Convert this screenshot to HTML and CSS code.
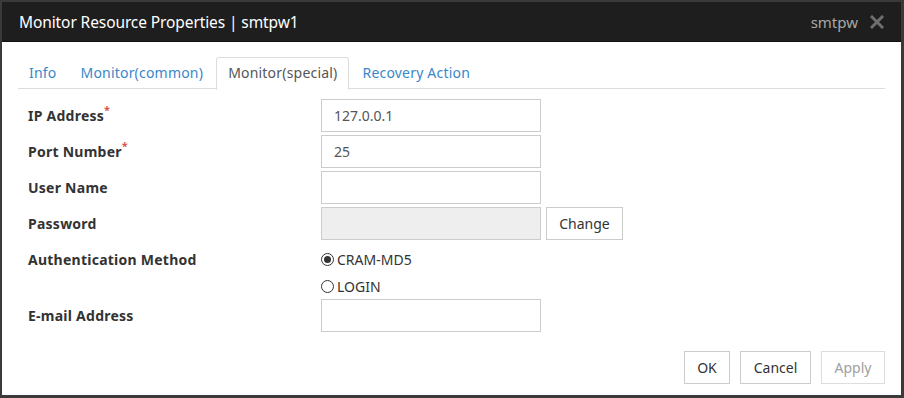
FILE: index.html
```html
<!doctype html>
<html lang="en">
    <head>
        <meta charset="UTF-8" />
        <title>Monitor Resource Properties</title>
        <link rel="stylesheet" href="styles.css">
    </head>
    <body>
        <div class="dialog">
            <div class="dialog-header">
                <span class="dialog-title">Monitor Resource Properties | smtpw1</span>
                <span class="dialog-header__right">
                    <span class="dialog-type">smtpw</span>
                    <svg class="dialog-close" width="14" height="14" viewBox="0 0 14 14">
                        <path d="M2 2 L12 12 M12 2 L2 12" stroke="#6e6e6e" stroke-width="3" stroke-linecap="square" />
                    </svg>
                </span>
            </div>
            <div class="dialog-body">
                <ul class="tabs">
                    <li class="tab">Info</li>
                    <li class="tab">Monitor(common)</li>
                    <li class="tab tab--active">Monitor(special)</li>
                    <li class="tab">Recovery Action</li>
                </ul>
                <div class="form">
                    <div class="form-row">
                        <label class="form-label">IP Address<span class="required">*</span></label>
                        <input class="form-input" type="text" value="127.0.0.1" />
                    </div>
                    <div class="form-row">
                        <label class="form-label">Port Number<span class="required">*</span></label>
                        <input class="form-input" type="text" value="25" />
                    </div>
                    <div class="form-row">
                        <label class="form-label">User Name</label>
                        <input class="form-input" type="text" value="" />
                    </div>
                    <div class="form-row">
                        <label class="form-label">Password</label>
                        <input class="form-input form-input--disabled" type="text" value="" disabled />
                        <button class="btn btn--change">Change</button>
                    </div>
                    <div class="form-row form-row--radio">
                        <label class="form-label">Authentication Method</label>
                        <div class="radio-group">
                            <div class="radio"><span class="radio-mark radio-mark--on"></span>CRAM-MD5</div>
                            <div class="radio"><span class="radio-mark"></span>LOGIN</div>
                        </div>
                    </div>
                    <div class="form-row form-row--email">
                        <label class="form-label">E-mail Address</label>
                        <input class="form-input" type="text" value="" />
                    </div>
                </div>
                <div class="dialog-footer">
                    <button class="btn btn--ok">OK</button>
                    <button class="btn btn--cancel">Cancel</button>
                    <button class="btn btn--apply" disabled>Apply</button>
                </div>
            </div>
        </div>
    </body>
</html>
```

FILE: styles.css
```css
* {
    padding: 0;
    margin: 0;
    box-sizing: border-box;
}

body {
    font-family: "Noto Sans", "Liberation Sans", sans-serif;
    background-color: #ffffff;
    width: 904px;
    height: 398px;
    overflow: hidden;
}

.dialog {
    width: 904px;
    height: 398px;
    border: 2px solid #3a3a3a;
    border-right-width: 3px;
    border-bottom-width: 3px;
    background: #ffffff;
    display: flex;
    flex-direction: column;
}

.dialog-header {
    height: 40px;
    background: #1e1e1e;
    color: #ffffff;
    display: flex;
    align-items: center;
    justify-content: space-between;
    padding: 0 17px 0 17px;
    border-bottom: 1px solid #111111;
}

.dialog-title {
    font-size: 15.5px;
    letter-spacing: -0.1px;
}

.dialog-header__right {
    display: flex;
    align-items: center;
    gap: 12px;
}

.dialog-type {
    color: #a8a8a8;
    font-size: 15px;
}

.dialog-close {
    display: block;
}

.dialog-body {
    flex: 1;
    padding: 15px 16px 0 16px;
    display: flex;
    flex-direction: column;
}

.tabs {
    list-style: none;
    display: flex;
    border-bottom: 1px solid #dddddd;
    height: 32px;
    font-size: 14px;
    letter-spacing: 0.2px;
}

.tab {
    color: #3a87c8;
    padding: 0 10px;
    margin-right: 2px;
    line-height: 30px;
    border: 1px solid transparent;
    border-bottom: none;
}

.tab--active {
    color: #555555;
    background: #ffffff;
    border-color: #dddddd;
    border-radius: 3px 3px 0 0;
    height: 33px;
    margin-bottom: -1px;
    padding: 0 11px;
}

.form {
    padding: 10px 0 0 10px;
    display: flex;
    flex-direction: column;
    gap: 3px;
}

.form-row {
    display: flex;
    align-items: center;
    height: 33px;
}

.form-label {
    width: 293px;
    font-size: 14px;
    font-weight: 700;
    color: #333333;
    letter-spacing: 0.25px;
}

.required {
    color: #d9534f;
    font-size: 11px;
    vertical-align: top;
    position: relative;
    top: -4px;
}

.form-input {
    width: 220px;
    height: 33px;
    border: 1px solid #cccccc;
    padding: 0 12px;
    font-family: inherit;
    font-size: 14px;
    color: #555555;
    background: #ffffff;
    outline: none;
}

.form-input--disabled {
    background: #eeeeee;
}

.btn {
    font-family: inherit;
    font-size: 14px;
    color: #333333;
    background: #ffffff;
    border: 1px solid #cccccc;
    height: 33px;
    padding: 0 10px;
}

.btn--change {
    margin-left: 5px;
    width: 77px;
}

.form-row--radio {
    height: auto;
    align-items: flex-start;
    margin-top: 7px;
}

.radio-group {
    display: flex;
    flex-direction: column;
    gap: 8px;
    font-size: 14px;
    color: #333333;
}

.radio {
    display: flex;
    align-items: center;
    height: 19px;
}

.radio-mark {
    width: 13px;
    height: 13px;
    border: 1px solid #333333;
    border-radius: 50%;
    margin-right: 3px;
    display: flex;
    align-items: center;
    justify-content: center;
}

.radio-mark--on::after {
    content: "";
    width: 7px;
    height: 7px;
    border-radius: 50%;
    background: #333333;
}

.form-row--email {
    margin-top: 0;
}

.form-row--radio .form-label {
    line-height: 19px;
}

.dialog-footer {
    display: flex;
    justify-content: flex-end;
    gap: 10px;
    padding: 19px 0 0 0;
}

.btn--ok {
    width: 46px;
}

.btn--cancel {
    width: 71px;
}

.btn--apply {
    width: 64px;
    color: #a0a0a0;
    border-color: #dddddd;
}
```
